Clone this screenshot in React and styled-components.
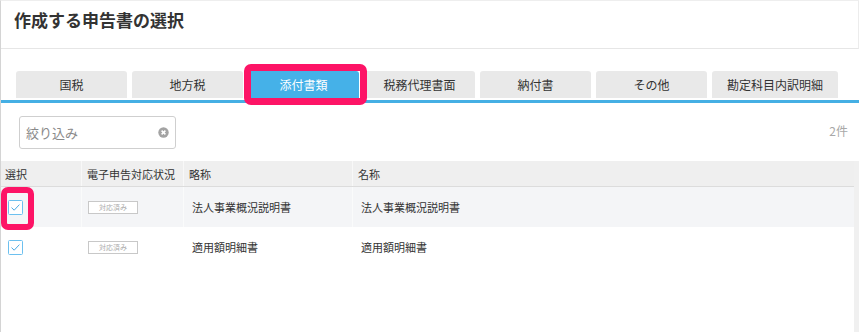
import React from "react"
import styled, {createGlobalStyle} from "styled-components"

const GlobalStyle = createGlobalStyle`
    html, body {
        margin: 0;
        padding: 0;
        background: #fff;
    }
    body {
        font-family: "Noto Sans CJK JP", "Noto Sans", sans-serif;
        color: #333;
    }
`;

const Frame = styled.div`
    width: 859px;
    height: 332px;
    box-sizing: border-box;
    border-left: 1px solid #d4d4d4;
    border-top: 1px solid #eeeeee;
    overflow: hidden;
    display: flex;
    flex-direction: column;
`;
const Header = styled.div`
    height: 48px;
    box-sizing: border-box;
    padding: 7px 0 0 13px;
    border-bottom: 1px solid #e6e6e6;
    border-right: 1px solid #ececec;
`;
const Title = styled.h1`
    margin: 0;
    font-size: 17px;
    line-height: 24px;
    font-weight: 700;
    color: #333;
`;
const TabBar = styled.div`
    display: flex;
    gap: 5px;
    padding: 22px 0 0 15px;
    border-bottom: 3px solid #45afe4;
`;
const Tab = styled.div`
    position: relative;
    width: ${p => p.$w || 111}px;
    height: 27px;
    margin-bottom: 2px;
    box-sizing: border-box;
    display: flex;
    align-items: center;
    justify-content: center;
    border-radius: 3px 3px 0 0;
    font-size: 12px;
    background: ${p => p.$active ? "#45b1e8" : "#e9e9e9"};
    color: ${p => p.$active ? "#fff" : "#333"};
`;
const Highlight = styled.div`
    position: absolute;
    top: ${p => p.$t}px;
    left: ${p => p.$l}px;
    right: ${p => p.$r}px;
    bottom: ${p => p.$b}px;
    border: ${p => p.$w || 7}px solid #fd1466;
    border-radius: 7px;
    pointer-events: none;
    z-index: 2;
`;
const Toolbar = styled.div`
    display: flex;
    justify-content: space-between;
    align-items: center;
    padding: 13px 11px 0 18px;
    height: 33px;
`;
const Search = styled.div`
    width: 157px;
    height: 33px;
    box-sizing: border-box;
    border: 1px solid #cfcfcf;
    border-radius: 3px;
    display: flex;
    align-items: center;
    justify-content: space-between;
    padding: 0 6px 0 6px;
`;
const Placeholder = styled.span`
    font-size: 13px;
    color: #8a8a8a;
`;
const Count = styled.span`
    font-size: 12px;
    color: #a8a8a8;
    margin-top: -5px;
`;
const TableWrap = styled.div`
    margin-top: 12px;
    display: flex;
    flex: 1;
`;
const Table = styled.div`
    flex: 1;
    display: flex;
    flex-direction: column;
`;
const Scroll = styled.div`
    width: 5px;
    background: #f0f0f0;
`;
const Row = styled.div`
    display: grid;
    grid-template-columns: 80px 102px 169px 1fr;
    height: ${p => p.$head ? 25 : 40}px;
    background: ${p => p.$head ? "#efefef" : p.$hover ? "#f4f5f7" : "#fff"};
    border-bottom: ${p => p.$head ? "1px solid #dcdcdc" : "none"};
`;
const Cell = styled.div`
    position: relative;
    display: flex;
    align-items: center;
    padding-left: ${p => p.$pad ?? 5}px;
    font-size: 11px;
    color: #333;
    border-left: ${p => p.$first ? "none" : "1px solid rgba(255,255,255,0.55)"};
`;
const Badge = styled.span`
    width: 50px;
    height: 13px;
    box-sizing: border-box;
    border: 1px solid #c8c8c8;
    display: flex;
    align-items: center;
    justify-content: center;
    font-size: 7px;
    color: #aaa;
    background: #fff;
`;
const CheckWrap = styled.span`
    position: relative;
    display: inline-flex;
`;

const Check = () => (
    <svg width="15" height="15" viewBox="0 0 15 15">
        <rect x="0.5" y="0.5" width="14" height="14" rx="1" fill="#fff" stroke="#6cc0ef" />
        <path d="M3.5 7.6 L6.2 10.2 L11.4 4.6" fill="none" stroke="#4aa9e4" strokeWidth="1" />
    </svg>
);
const ClearIcon = () => (
    <svg width="11" height="11" viewBox="0 0 11 11">
        <circle cx="5.5" cy="5.5" r="5.2" fill="#a3a3a3" />
        <path d="M3.6 3.6 L7.4 7.4 M7.4 3.6 L3.6 7.4" stroke="#fff" strokeWidth="1.5" />
    </svg>
);

const tabs = [
    {label: "国税"},
    {label: "地方税"},
    {label: "添付書類", active: true},
    {label: "税務代理書面"},
    {label: "納付書"},
    {label: "その他"},
    {label: "勘定科目内訳明細", w: 126},
];

const rows = [
    {abbr: "法人事業概況説明書", name: "法人事業概況説明書", hover: true, mark: true},
    {abbr: "適用額明細書", name: "適用額明細書"},
];

export default function App() {
    return (
        <Frame>
            <GlobalStyle />
            <Header>
                <Title>作成する申告書の選択</Title>
            </Header>
            <TabBar>
                {tabs.map(t => (
                    <Tab key={t.label} $active={t.active} $w={t.w}>
                        {t.label}
                        {t.active && <Highlight $t={-7} $l={-4} $r={-8} $b={-7} />}
                    </Tab>
                ))}
            </TabBar>
            <Toolbar>
                <Search>
                    <Placeholder>絞り込み</Placeholder>
                    <ClearIcon />
                </Search>
                <Count>2件</Count>
            </Toolbar>
            <TableWrap>
                <Table>
                    <Row $head>
                        <Cell $first $pad={4}>選択</Cell>
                        <Cell>電子申告対応状況</Cell>
                        <Cell>略称</Cell>
                        <Cell>名称</Cell>
                    </Row>
                    {rows.map(r => (
                        <Row key={r.abbr} $hover={r.hover}>
                            <Cell $first $pad={7}>
                                <CheckWrap>
                                    <Check />
                                    {r.mark && <Highlight $t={-13} $l={-7} $r={-11} $b={-15} $w={6} />}
                                </CheckWrap>
                            </Cell>
                            <Cell $pad={6}><Badge>対応済み</Badge></Cell>
                            <Cell $pad={8}>{r.abbr}</Cell>
                            <Cell $pad={8}>{r.name}</Cell>
                        </Row>
                    ))}
                </Table>
                <Scroll />
            </TableWrap>
        </Frame>
    );
}
